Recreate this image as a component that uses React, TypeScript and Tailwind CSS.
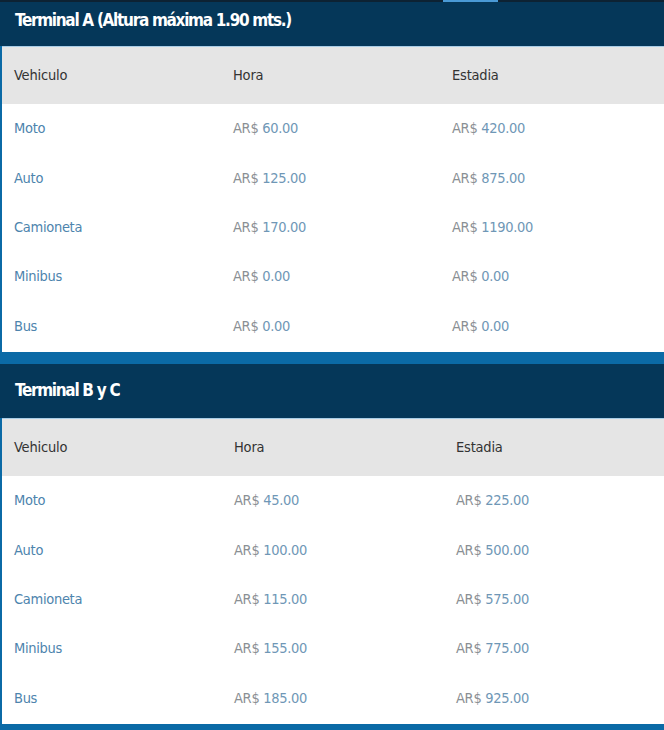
import React from 'react';

type Row = { name: string; hora: string; estadia: string };

const TERMINAL_A: Row[] = [
  { name: 'Moto', hora: '60.00', estadia: '420.00' },
  { name: 'Auto', hora: '125.00', estadia: '875.00' },
  { name: 'Camioneta', hora: '170.00', estadia: '1190.00' },
  { name: 'Minibus', hora: '0.00', estadia: '0.00' },
  { name: 'Bus', hora: '0.00', estadia: '0.00' },
];

const TERMINAL_BC: Row[] = [
  { name: 'Moto', hora: '45.00', estadia: '225.00' },
  { name: 'Auto', hora: '100.00', estadia: '500.00' },
  { name: 'Camioneta', hora: '115.00', estadia: '575.00' },
  { name: 'Minibus', hora: '155.00', estadia: '775.00' },
  { name: 'Bus', hora: '185.00', estadia: '925.00' },
];

const Price = ({ value }: { value: string }) => (
  <span>
    <span className="text-[#8a8f94]">AR$ </span>
    <span className="text-[#6f97b6]">{value}</span>
  </span>
);

const RateTable = ({
  title,
  rows,
  headerClass,
  cols,
}: {
  title: string;
  rows: Row[];
  headerClass: string;
  cols: string;
}) => (
  <section>
    <div className={`flex items-center bg-[#053759] px-[15px] text-[17px] font-bold text-white ${headerClass}`}>
      <span className="tracking-[-1.3px]">{title}</span>
    </div>
    <div className="border-l-2 border-[#0b6aa6]">
      <div className={`grid ${cols} h-[58px] items-center border-t border-[#a9cde6] bg-[#e5e5e5] pl-[12px] text-[14.5px] tracking-[-0.2px] text-[#333]`}>
        <span>Vehiculo</span>
        <span>Hora</span>
        <span>Estadia</span>
      </div>
      <div className="bg-white pb-[1px]">
        {rows.map((r) => (
          <div key={r.name} className={`grid ${cols} h-[49.4px] items-center pl-[12px] pt-[1px] text-[14.5px] tracking-[-0.3px]`}>
            <span className="text-[#4d84ad]">{r.name}</span>
            <Price value={r.hora} />
            <Price value={r.estadia} />
          </div>
        ))}
      </div>
    </div>
  </section>
);

export default function App() {
  return (
    <div
      className="min-h-[730px] w-[664px] overflow-hidden bg-[#0b6aa6]"
      style={{ fontFamily: '"DejaVu Sans Condensed", "Liberation Sans", sans-serif' }}
    >
      <div className="flex h-[2px] bg-[#0d2233]">
        <div className="ml-[443px] w-[55px] bg-[#4a9ad6]" />
      </div>
      <RateTable
        title="Terminal A (Altura máxima 1.90 mts.)"
        rows={TERMINAL_A}
        headerClass="h-[44px] pb-[6px]"
        cols="grid-cols-[219px_219px_1fr]"
      />
      <div className="h-[12px]" />
      <RateTable
        title="Terminal B y C"
        rows={TERMINAL_BC}
        headerClass="h-[54px]"
        cols="grid-cols-[220px_222px_1fr]"
      />
    </div>
  );
}
